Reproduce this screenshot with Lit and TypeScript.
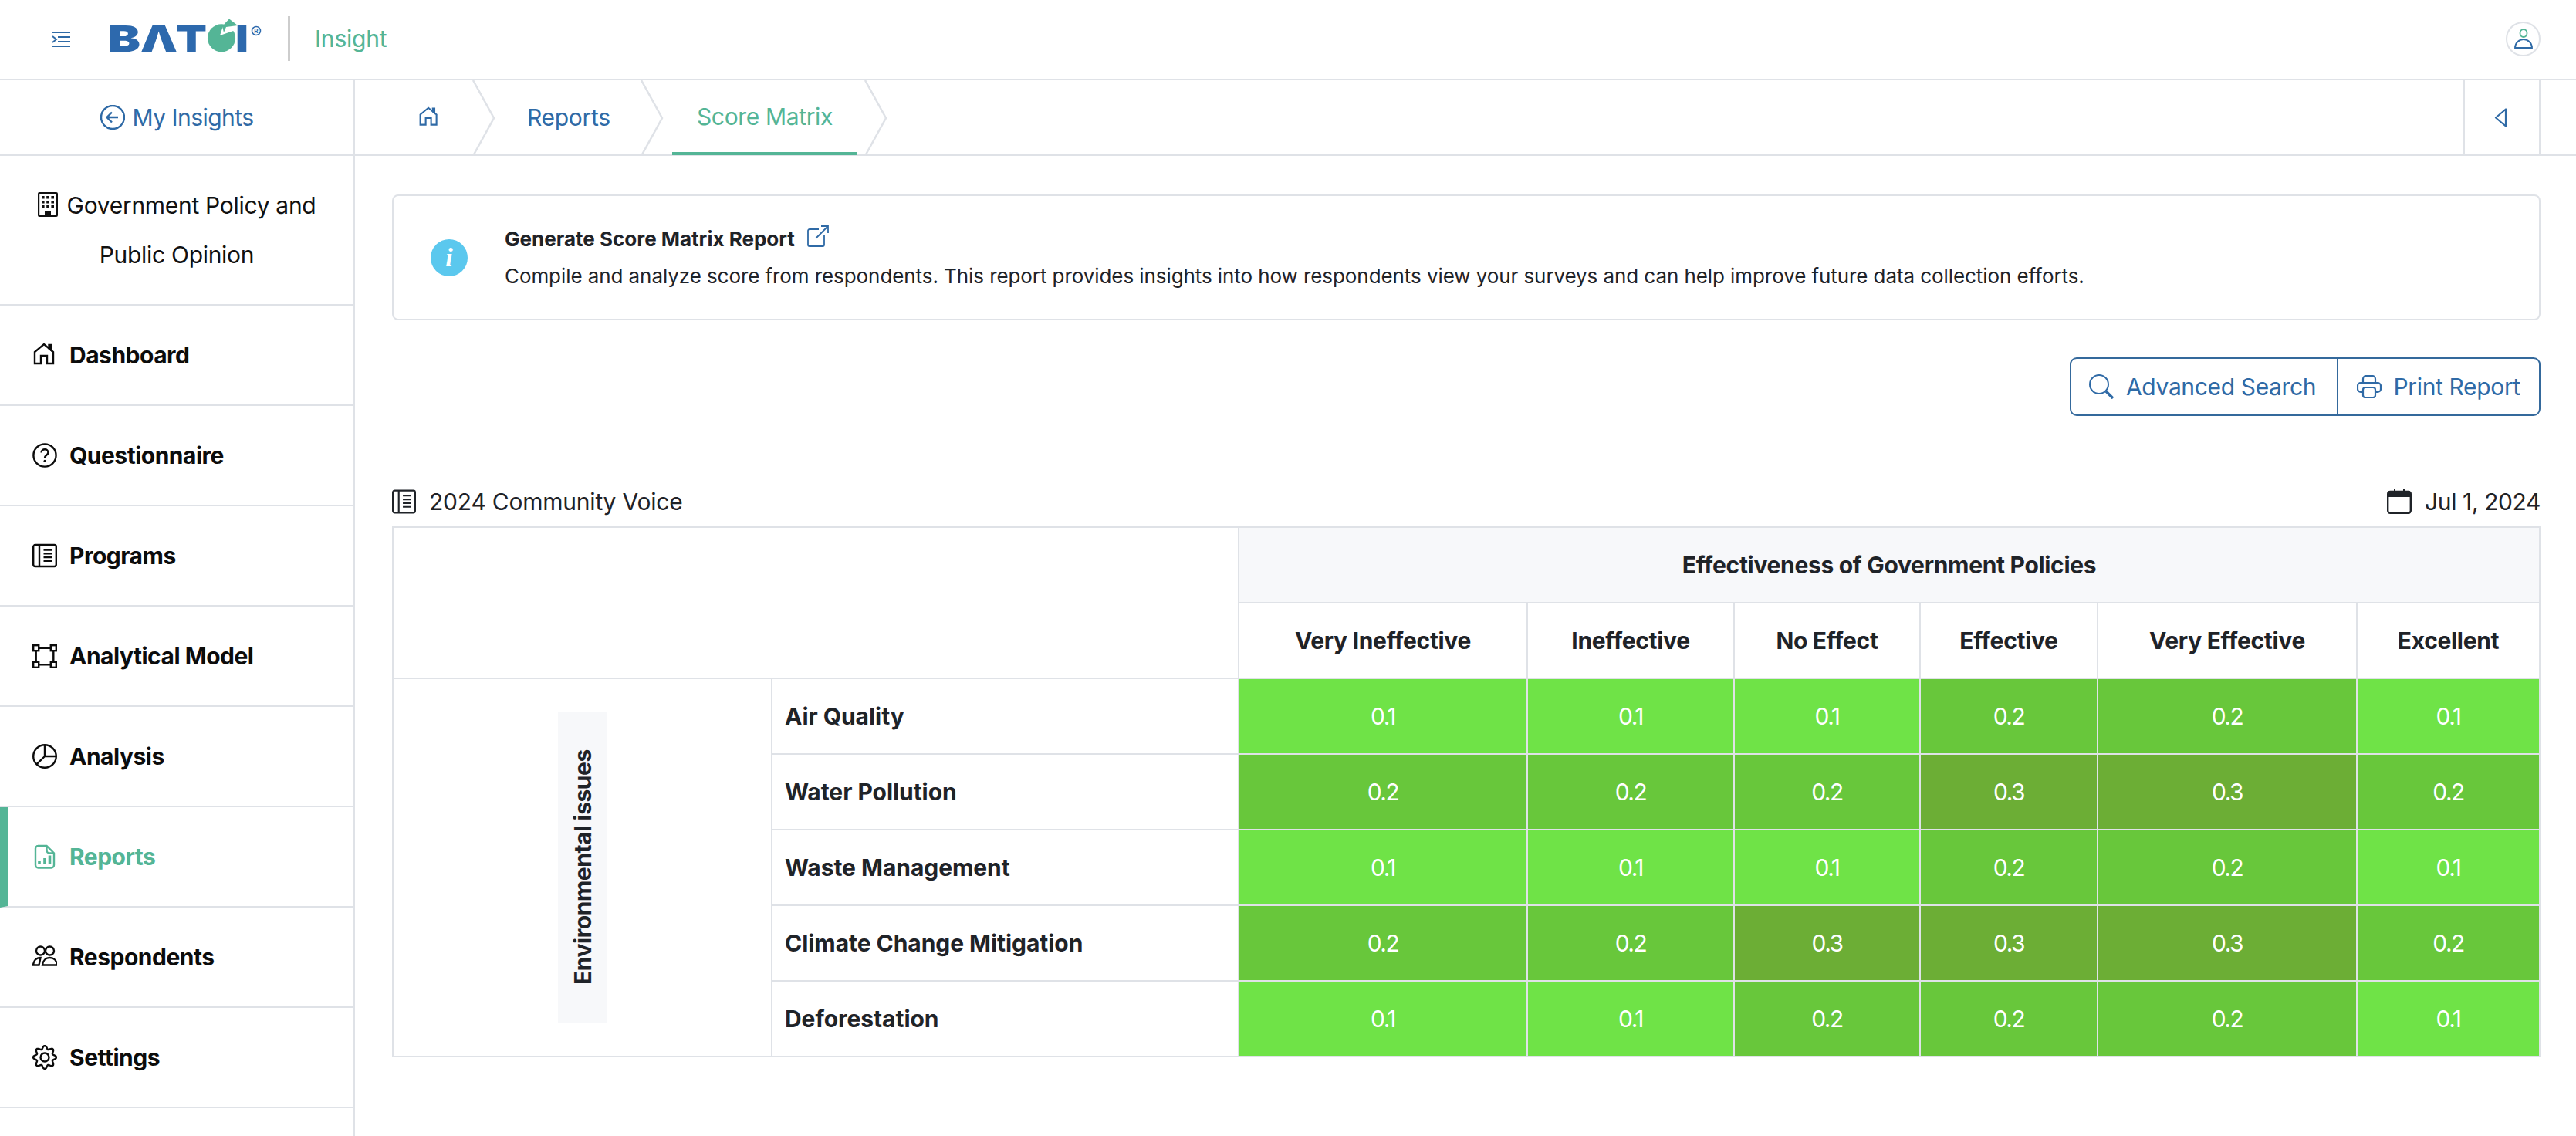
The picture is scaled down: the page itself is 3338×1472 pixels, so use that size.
import { LitElement, html, css, svg } from "lit";
import { customElement } from "lit/decorators.js";

function gearPath(): string {
  const pts: string[] = [];
  const n = 144;
  for (let i = 0; i < n; i++) {
    const t = (i / n) * Math.PI * 2;
    const r = 12.9 + 2.1 * Math.cos(8 * t);
    const x = 16 + r * Math.sin(t);
    const y = 16 - r * Math.cos(t);
    pts.push(`${i === 0 ? "M" : "L"}${x.toFixed(2)} ${y.toFixed(2)}`);
  }
  return pts.join("") + "Z";
}

const ICONS: Record<string, any> = {
  home: svg`<path d="M3 27V12L15 2l12 10v15h-8V17h-8v10H3z"/><path d="M21.5 3v4.5l2.5 2V3z" fill="currentColor"/>`,
  question: svg`<circle cx="16" cy="16" r="14.6"/><path d="M11.6 12.6c0-2.6 2-4.3 4.5-4.3s4.3 1.6 4.3 3.9c0 3.6-4.4 3.4-4.4 7"/><circle cx="16" cy="23.2" r="1.5" fill="currentColor" stroke="none"/>`,
  program: svg`<rect x="1.2" y="2" width="29.6" height="28" rx="2.5"/><path d="M9 2v28M14.5 8.5h11M14.5 13.3h11M14.5 18.1h11M14.5 22.9h11"/>`,
  model: svg`<rect x="1.2" y="2.2" width="7" height="7"/><rect x="23.8" y="2.2" width="7" height="7"/><rect x="1.2" y="23.8" width="7" height="7"/><rect x="23.8" y="23.8" width="7" height="7"/><path d="M8.2 5.7h15.6M8.2 27.3h15.6M4.7 9.2v14.6M27.3 9.2v14.6"/>`,
  pie: svg`<circle cx="16" cy="16" r="14.8"/><path d="M16 1.2V16h14.8M16 16L5.4 26.4"/>`,
  report: svg`<path d="M7 2h11.5L28 11.5V27a3.5 3.5 0 0 1-3.5 3.5h-17A3.5 3.5 0 0 1 4 27V5.5A3.5 3.5 0 0 1 7.5 2zM18.5 2v6a3.5 3.5 0 0 0 3.5 3.5h6"/><path d="M9 25.5V22M16 25.5V18M22.5 25.5v-11" stroke-width="3.6"/>`,
  people: svg`<circle cx="10.5" cy="8" r="5.5"/><circle cx="22.5" cy="8" r="5.5"/><path d="M1 26.5h7.5l2-9.5C5 17 1.5 21 1 26.5zM13 26.5c.5-6 4.5-9.5 9.5-9.5s9 3.5 9.5 9.5z"/>`,
  gear: svg`<circle cx="16" cy="16" r="5.5"/><path d="${gearPath()}" stroke-linejoin="round"/>`,
};

const NAV = [
  ["home", "Dashboard"],
  ["question", "Questionnaire"],
  ["program", "Programs"],
  ["model", "Analytical Model"],
  ["pie", "Analysis"],
  ["report", "Reports"],
  ["people", "Respondents"],
  ["gear", "Settings"],
];

const COLS = ["Very Ineffective", "Ineffective", "No Effect", "Effective", "Very Effective", "Excellent"];
const ROWS: [string, string[]][] = [
  ["Air Quality", ["0.1", "0.1", "0.1", "0.2", "0.2", "0.1"]],
  ["Water Pollution", ["0.2", "0.2", "0.2", "0.3", "0.3", "0.2"]],
  ["Waste Management", ["0.1", "0.1", "0.1", "0.2", "0.2", "0.1"]],
  ["Climate Change Mitigation", ["0.2", "0.2", "0.3", "0.3", "0.3", "0.2"]],
  ["Deforestation", ["0.1", "0.1", "0.2", "0.2", "0.2", "0.1"]],
];
const WIDTHS = [491, 605, 374, 268, 241, 230, 336, 237];

@customElement("app-root")
export class AppRoot extends LitElement {
  static styles = css`
    :host {
      display: flex;
      flex-direction: column;
      width: 100%;
      height: 100vh;
      overflow: hidden;
      background: #fff;
      font-family: Inter, "Noto Sans", sans-serif;
      color: #1f2328;
      --line: #dfe2e7;
      --blue: #2f6aa6;
      --green: #54b596;
    }
    * { box-sizing: border-box; }
    svg { display: block; flex: none; }
    .ico { fill: none; stroke: currentColor; stroke-width: 2.4; }

    header {
      height: 104px;
      flex: none;
      display: flex;
      align-items: center;
      border-bottom: 2px solid var(--line);
      padding-left: 67px;
      padding-right: 46px;
    }
    .burger { color: var(--blue); margin-right: 51px; }
    .logo { margin-bottom: 10px; overflow: visible; }
    .logo text { font-family: Inter, sans-serif; font-weight: 900; font-size: 47px; fill: #2d69ad; }
    .vline { width: 3px; height: 58px; background: #cdcdcd; margin-left: 34px; margin-right: 32px; margin-top: -2px; }
    .product { font-size: 30px; color: var(--green); letter-spacing: -0.2px; margin-top: -2px; }
    .avatar {
      margin-left: auto;
      width: 45px;
      height: 45px;
      border: 2px solid var(--line);
      border-radius: 50%;
      display: flex;
      align-items: center;
      justify-content: center;
      margin-top: -2px;
    }

    .body { flex: 1; display: flex; min-height: 0; }
    aside { width: 460px; flex: none; border-right: 2px solid var(--line); }
    .back {
      height: 98px;
      border-bottom: 2px solid var(--line);
      display: flex;
      align-items: center;
      justify-content: center;
      gap: 10px;
      color: var(--blue);
      font-size: 30px;
      letter-spacing: -0.55px;
    }
    .proj {
      height: 194px;
      border-bottom: 2px solid var(--line);
      padding: 0 20px;
      display: flex;
      align-items: center;
      justify-content: center;
      text-align: center;
      font-size: 30px;
      line-height: 64px;
      letter-spacing: -0.3px;
      color: #111;
    }
    .proj svg { display: inline-block; vertical-align: -4px; margin-right: 12px; }
    .nav {
      height: 130px;
      border-bottom: 2px solid var(--line);
      display: flex;
      align-items: center;
      gap: 16px;
      padding-left: 42px;
      font-size: 30px;
      font-weight: 700;
      color: #0c0c0c;
      letter-spacing: -0.5px;
    }
    .nav.active { border-left: 10px solid var(--green); padding-left: 32px; color: var(--green); }

    main { flex: 1; min-width: 0; display: flex; flex-direction: column; }
    .crumbs {
      height: 98px;
      flex: none;
      display: flex;
      align-items: stretch;
      border-bottom: 2px solid var(--line);
      padding-right: 46px;
      color: var(--blue);
      font-size: 30px;
    }
    .crumb { display: flex; align-items: center; }
    .crumb.h { margin-left: 82px; margin-right: 42px; }
    .crumb.r { margin-left: 41px; margin-right: 38px; width: 109px; letter-spacing: -0.3px; white-space: nowrap; }
    .crumb.s {
      margin-left: 11px;
      margin-right: 9px;
      width: 240px;
      justify-content: center;
      color: var(--green);
      border-bottom: 4px solid var(--green);
      letter-spacing: -0.35px;
      white-space: nowrap;
      margin-bottom: -1px;
    }
    .chev { stroke: var(--line); stroke-width: 2.5; fill: none; }
    .collapse {
      margin-left: auto;
      width: 100px;
      border-left: 2px solid var(--line);
      border-right: 2px solid var(--line);
      display: flex;
      align-items: center;
      justify-content: center;
      padding-right: 4px;
    }

    .content { padding: 50px 46px 0 48px; display: flex; flex-direction: column; }
    .card {
      height: 163px;
      border: 2px solid var(--line);
      border-radius: 8px;
      display: flex;
      align-items: center;
      padding-left: 48px;
      gap: 48px;
    }
    .info {
      width: 48px;
      height: 48px;
      flex: none;
      border-radius: 50%;
      background: #5bc8ee;
      color: #fff;
      font: italic 700 34px "Liberation Serif", serif;
      display: flex;
      align-items: center;
      justify-content: center;
    }
    .card-title { display: flex; align-items: center; gap: 16px; font-size: 26px; font-weight: 700; letter-spacing: 0; }
    .card-title svg { margin-top: -6px; color: var(--blue); }
    .card-text { margin-top: 17px; font-size: 26px; letter-spacing: -0.08px; white-space: nowrap; }
    .card-body { margin-top: -1px; }

    .actions { display: flex; justify-content: flex-end; margin-top: 48px; }
    .group {
      display: flex;
      height: 76px;
      border: 2.5px solid #34699c;
      border-radius: 9px;
      color: var(--blue);
      font-size: 30px;
      letter-spacing: -0.35px;
    }
    .btn { display: flex; align-items: center; gap: 16px; white-space: nowrap; }
    .btn.a { width: 345.5px; padding-left: 23px; border-right: 2.5px solid #34699c; }
    .btn.b { width: 260.5px; padding-left: 24px; }

    .meta {
      margin-top: 93px;
      margin-bottom: 14px;
      height: 36px;
      display: flex;
      align-items: center;
      justify-content: space-between;
      font-size: 30px;
      letter-spacing: -0.22px;
    }
    .meta div { display: flex; align-items: center; gap: 17px; }
    .meta .date { letter-spacing: -0.4px; }

    table {
      border-collapse: separate;
      border-spacing: 0;
      table-layout: fixed;
      width: 2784px;
      border-top: 2px solid var(--line);
      border-left: 2px solid var(--line);
    }
    th, td {
      height: 98px;
      border-right: 2px solid var(--line);
      border-bottom: 2px solid var(--line);
      padding: 0;
      text-align: center;
      font-size: 30px;
      font-weight: 700;
      letter-spacing: -0.32px;
    }
    .top { background: #f7f8fa; }
    .row { text-align: left; padding-left: 16px; letter-spacing: -0.05px; }
    .cell { color: #fff; font-weight: 400; font-size: 30px; letter-spacing: -1.5px; }
    .v1 { background: #6fe347; }
    .v2 { background: #68c73b; }
    .v3 { background: #6cae35; }
    .vwrap { display: flex; justify-content: center; }
    .vlabel {
      writing-mode: vertical-rl;
      transform: rotate(180deg);
      background: #f7f8fa;
      width: 64px;
      height: 402px;
      text-align: center;
      line-height: 64px;
      white-space: nowrap;
      letter-spacing: -0.45px;
    }
  `;

  private icon(name: string, size = 32) {
    return html`<svg class="ico" width=${size} height=${size} viewBox="0 0 32 32">${ICONS[name]}</svg>`;
  }

  private chevron() {
    return html`<svg class="chev" width="30" height="98" viewBox="0 0 30 98"><path d="M1 0l27 49L1 98"/></svg>`;
  }

  render() {
    return html`
      <header>
        <svg class="burger" width="24" height="20" viewBox="0 0 24 20" fill="none" stroke="currentColor" stroke-width="2">
          <path d="M0 1h24M8 7h16M8 13h16M0 19h24M1 6l5 4-5 4"/>
        </svg>
        <svg class="logo" width="197" height="60" viewBox="0 -8 197 60">
          <text x="-2" y="43" textLength="42" lengthAdjust="spacingAndGlyphs">B</text>
          <text x="40" y="43" textLength="48" lengthAdjust="spacingAndGlyphs">Λ</text>
          <text x="86" y="43" textLength="40" lengthAdjust="spacingAndGlyphs">T</text>
          <circle cx="145" cy="25.3" r="18" fill="#54b596"/>
          <path d="M148 7l-5 15 23-8V7z" fill="#fff"/>
          <path d="M146 10l9-9.5 11 8.5-15 2-3 7z" fill="#54b596"/>
          <text x="163" y="43" textLength="17" lengthAdjust="spacingAndGlyphs">I</text>
          <circle cx="190" cy="16" r="5.5" fill="none" stroke="#2d69ad" stroke-width="1.5"/>
          <text x="190" y="16" text-anchor="middle" dominant-baseline="central" style="font-size:8px;font-weight:700">R</text>
        </svg>
        <span class="vline"></span>
        <span class="product">Insight</span>
        <span class="avatar">
          <svg width="24" height="26" viewBox="0 0 24 26" fill="none" stroke-width="1.8">
            <ellipse cx="12" cy="6" rx="4.5" ry="5" stroke="#54b596"/>
            <path d="M1 25h22c0-6-5-11-11-11S1 19 1 25z" stroke="#2f6aa6"/>
          </svg>
        </span>
      </header>
      <div class="body">
        <aside>
          <div class="back">
            <svg class="ico" width="32" height="32" viewBox="0 0 32 32" stroke-width="2"><circle cx="16" cy="16" r="15"/><path d="M23 16H9M15 9.5L8.5 16l6.5 6.5"/></svg>
            <span>My Insights</span>
          </div>
          <div class="proj">
            <span>
              <svg style="display:inline-block" width="26" height="32" viewBox="0 0 26 32" fill="none" stroke="currentColor" stroke-width="2.2">
                <rect x="1.1" y="1.1" width="23.8" height="29.8" rx="1"/>
                <path fill="currentColor" stroke="none" d="M5 5h3.6v3.6H5zM11.2 5h3.6v3.600h-3.600zM17.4 5H21v3.600h-3.600zM5 11h3.600v3.600H5zM11.200 11h3.600v3.600h-3.600zM17.400 11H21v3.600h-3.600zM5 17h3.600v3.600H5zM11.200 17h3.600v3.600h-3.600zM17.400 17H21v3.600h-3.600zM9 24h8v7H9z"/>
              </svg>Government Policy and<br />Public Opinion
            </span>
          </div>
          ${NAV.map(
            ([ic, label]) => html`<div class="nav ${label === "Reports" ? "active" : ""}">${this.icon(ic)}<span>${label}</span></div>`
          )}
        </aside>
        <main>
          <div class="crumbs">
            <div class="crumb h">
              <svg class="ico" width="28" height="28" viewBox="0 0 32 32">${ICONS.home}</svg>
            </div>
            ${this.chevron()}
            <div class="crumb r">Reports</div>
            ${this.chevron()}
            <div class="crumb s">Score Matrix</div>
            ${this.chevron()}
            <div class="collapse">
              <svg width="17" height="25" viewBox="0 0 17 25" fill="none" stroke="#2f6aa6" stroke-width="2.2" stroke-linejoin="round"><path d="M15 1.5v22L2 12.5z"/></svg>
            </div>
          </div>
          <div class="content">
            <section class="card">
              <span class="info">i</span>
              <div class="card-body">
                <div class="card-title">
                  <span>Generate Score Matrix Report</span>
                  <svg width="28" height="28" viewBox="0 0 28 28" fill="none" stroke="currentColor" stroke-width="1.8">
                    <path d="M15 5H3a2 2 0 0 0-2 2v18a2 2 0 0 0 2 2h17a2 2 0 0 0 2-2V13M11 17L27 1M18 1h9v9"/>
                  </svg>
                </div>
                <div class="card-text">Compile and analyze score from respondents. This report provides insights into how respondents view your surveys and can help improve future data collection efforts.</div>
              </div>
            </section>
            <div class="actions">
              <div class="group">
                <div class="btn a">
                  <svg width="32" height="32" viewBox="0 0 32 32" fill="none" stroke="currentColor" stroke-width="2"><circle cx="13" cy="13" r="12"/><path d="M22 22l9 9" stroke-width="3.5"/></svg>
                  <span>Advanced Search</span>
                </div>
                <div class="btn b">
                  <svg width="32" height="30" viewBox="0 0 32 30" fill="none" stroke="currentColor" stroke-width="2.2">
                    <path d="M8 10V5a4 4 0 0 1 4-4h8a4 4 0 0 1 4 4v5M8 22H5a4 4 0 0 1-4-4v-4a4 4 0 0 1 4-4h22a4 4 0 0 1 4 4v4a4 4 0 0 1-4 4h-3"/>
                    <rect x="8" y="16" width="16" height="13" rx="3"/>
                  </svg>
                  <span>Print Report</span>
                </div>
              </div>
            </div>
            <div class="meta">
              <div>
                <svg width="31" height="32" viewBox="0 0 32 32" fill="none" stroke="currentColor" stroke-width="2.2">
                  <rect x="1.1" y="1.1" width="29.8" height="29.8" rx="2.5"/>
                  <path d="M9 1v30M14.500 8h11M14.500 13h11M14.500 18h11M14.500 23h11"/>
                </svg>
                <span>2024 Community Voice</span>
              </div>
              <div class="date">
                <svg width="32" height="32" viewBox="0 0 32 32" fill="none">
                  <rect x="1.2" y="3" width="29.6" height="27.8" rx="3" stroke="currentColor" stroke-width="2.4"/>
                  <path d="M1 6a3 3 0 0 1 3-4h5V0h2v2h10V0h2v2h5a3 3 0 0 1 3 4v4H1z" fill="currentColor"/>
                </svg>
                <span>Jul 1, 2024</span>
              </div>
            </div>
            <table>
              <colgroup>${WIDTHS.map((w) => html`<col style="width:${w}px" />`)}</colgroup>
              <thead>
                <tr>
                  <th colspan="2" rowspan="2"></th>
                  <th colspan="6" class="top">Effectiveness of Government Policies</th>
                </tr>
                <tr>${COLS.map((c) => html`<th>${c}</th>`)}</tr>
              </thead>
              <tbody>
                ${ROWS.map(
                  ([name, vals], i) => html`<tr>
                    ${i === 0
                      ? html`<th rowspan="5"><div class="vwrap"><div class="vlabel">Environmental issues</div></div></th>`
                      : ""}
                    <th class="row">${name}</th>
                    ${vals.map((v) => html`<td class="cell v${v.slice(2)}">${v}</td>`)}
                  </tr>`
                )}
              </tbody>
            </table>
          </div>
        </main>
      </div>
    `;
  }
}
